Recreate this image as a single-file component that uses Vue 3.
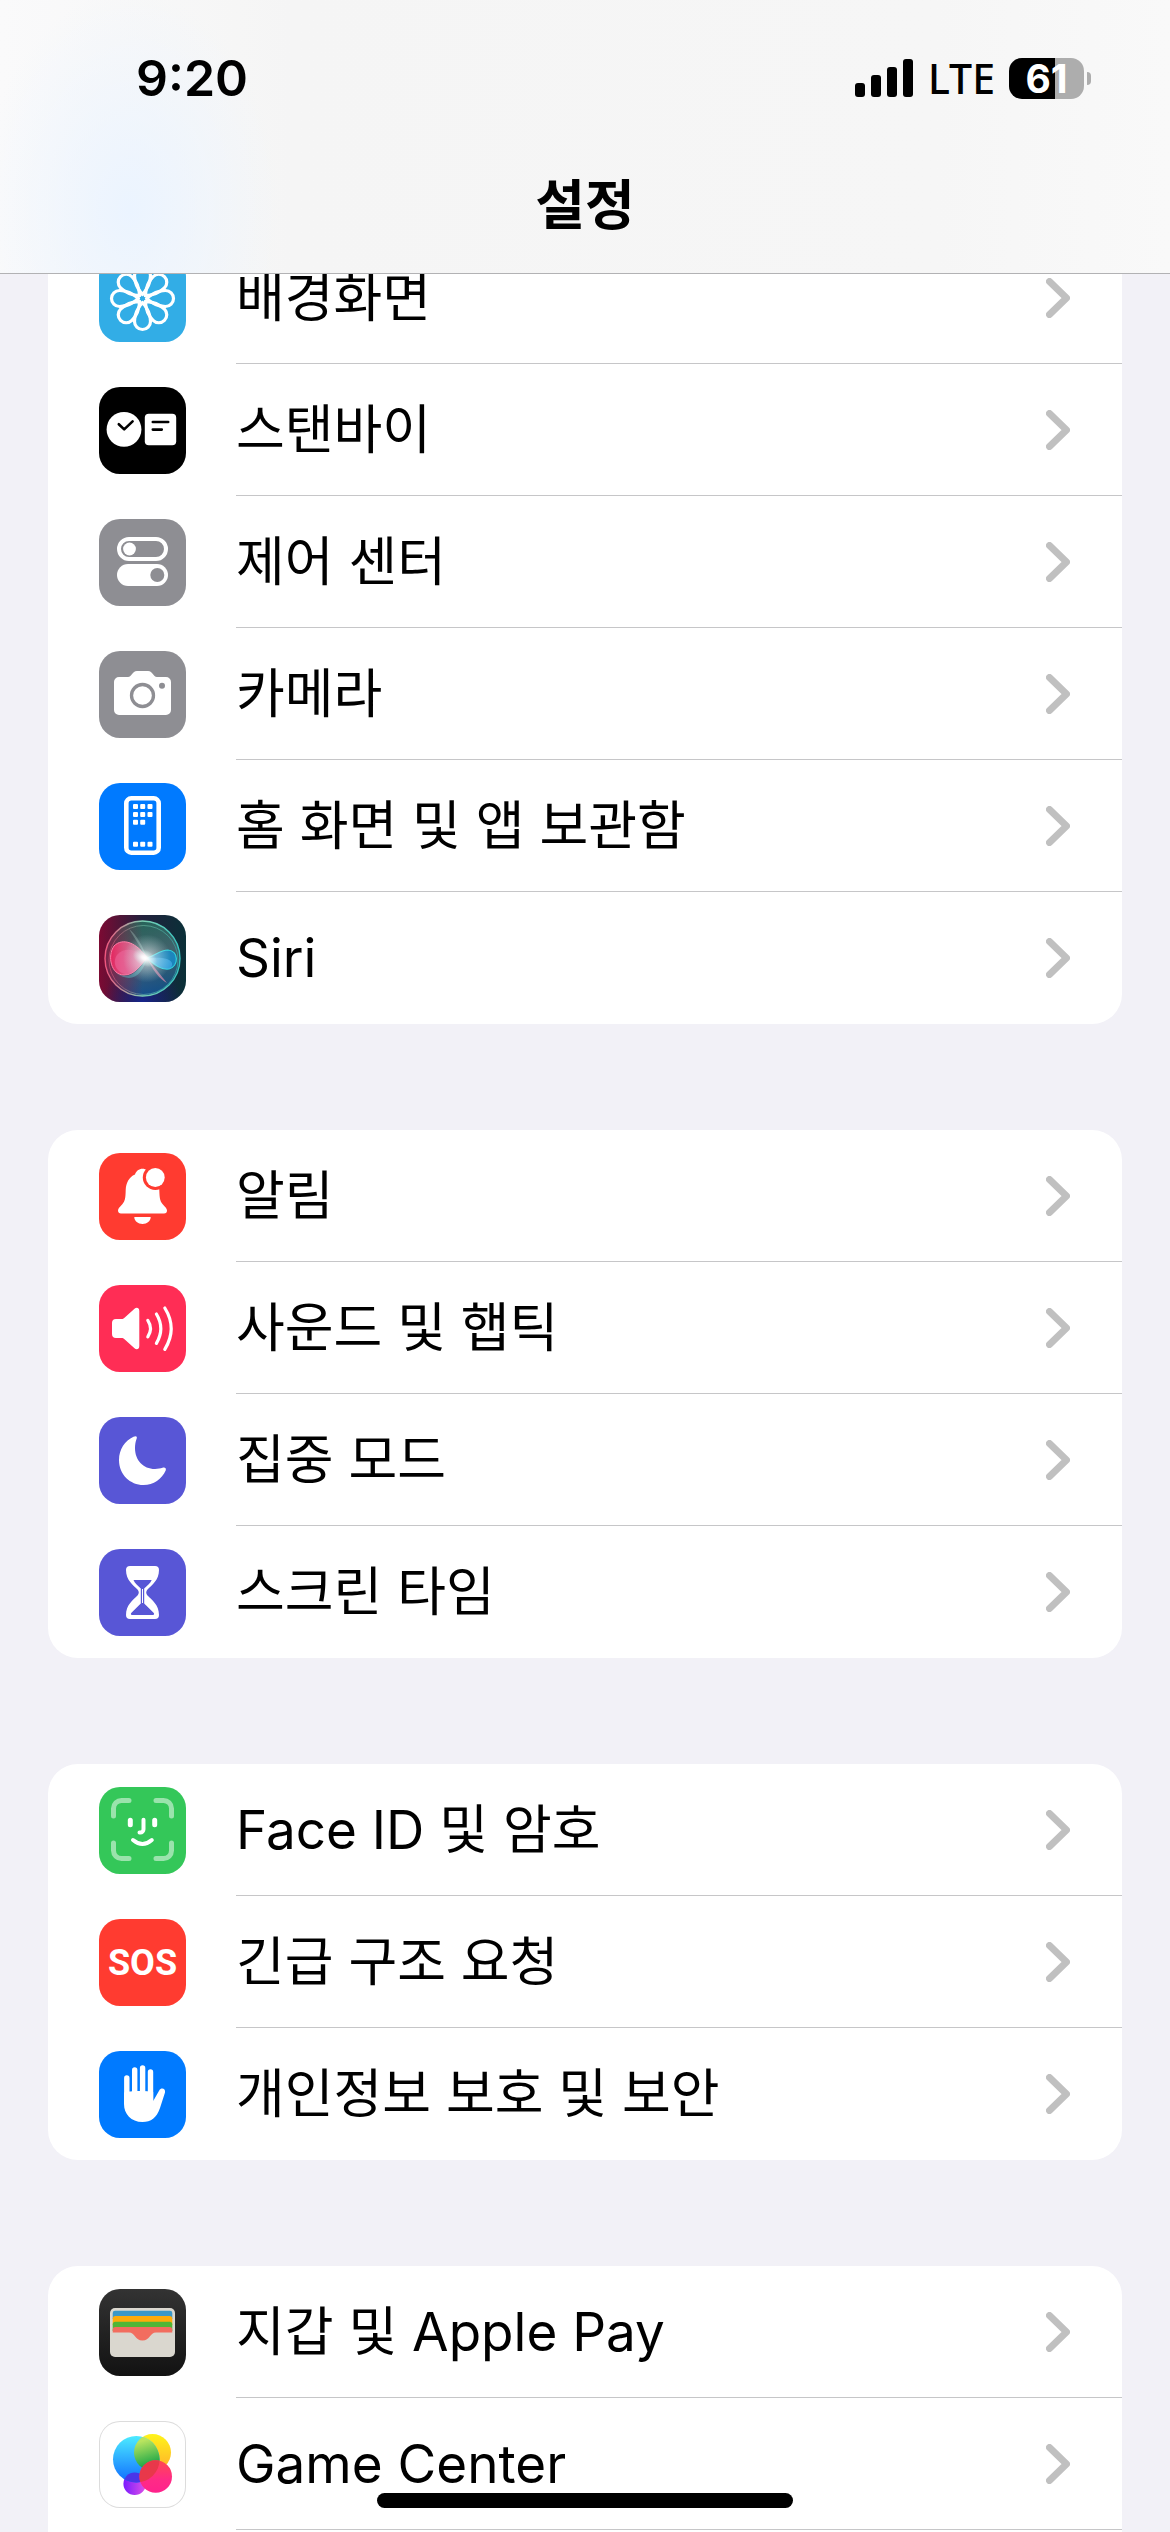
<template>
  <div class="screen">
    <header class="navbar">
      <div class="status-bar">
        <time class="clock">9:20</time>
        <div class="indicators">
          <svg class="signal" viewBox="0 0 58 38" aria-hidden="true">
            <rect x="0" y="24" width="10" height="14" rx="3" />
            <rect x="16" y="16" width="10" height="22" rx="3" />
            <rect x="32" y="8" width="10" height="30" rx="3" />
            <rect x="48" y="0" width="10" height="38" rx="3" />
          </svg>
          <span class="network">LTE</span>
          <span class="battery">61</span>
        </div>
      </div>
      <h1>설정</h1>
    </header>

    <main class="groups">
      <ul v-for="(group, index) in groups" :key="index" class="group">
        <li v-for="item in group" :key="item.icon">
          <a href="#" class="row">
            <span :class="['icon', item.icon]">
              <span v-if="item.icon === 'sos'" class="sos-text">SOS</span>
              <svg v-else viewBox="0 0 87 87" aria-hidden="true">
                <g v-if="item.icon === 'wallpaper'" class="line" stroke-width="3.2">
                  <path
                    v-for="n in 8"
                    :key="n"
                    d="M43.5 39.5C38.5 34 35.5 27 35.5 20.5A8 8 0 0 1 51.5 20.5C51.5 27 48.5 34 43.5 39.5Z"
                    :transform="`rotate(${n * 45} 43.5 43.5)`"
                  />
                </g>

                <g v-else-if="item.icon === 'standby'">
                  <circle cx="25" cy="42.4" r="17.4" />
                  <rect x="45.8" y="26.8" width="31.4" height="31.4" rx="4" />
                  <path class="line dark" stroke-width="2.6" d="M19.8 37.2L25.2 42.4L33.6 34.4M53.8 35H69.2M53.8 42.6H62.8" />
                </g>

                <g v-else-if="item.icon === 'control'">
                  <rect class="line" stroke-width="4" x="20" y="20" width="47" height="20" rx="10" />
                  <circle cx="30.5" cy="30" r="6.4" />
                  <rect x="18" y="45" width="51" height="22" rx="11" />
                  <circle cx="58.3" cy="56" r="7" fill="#8e8e93" />
                </g>

                <g v-else-if="item.icon === 'camera'">
                  <path d="M20 26H29C33 26 33 20 38 20H49C54 20 54 26 58 26H67A5 5 0 0 1 72 31V59A5 5 0 0 1 67 64H20A5 5 0 0 1 15 59V31A5 5 0 0 1 20 26Z" />
                  <circle cx="43.5" cy="44.5" r="11" fill="none" stroke="#8e8e93" stroke-width="3.3" />
                  <circle cx="63" cy="34.8" r="3" fill="#8e8e93" />
                </g>

                <g v-else-if="item.icon === 'home'">
                  <rect class="line" stroke-width="4.6" x="27.3" y="15.3" width="32.4" height="54.4" rx="5" />
                  <rect v-for="dot in homeDots" :key="dot.join()" :x="dot[0]" :y="dot[1]" width="5" height="5" rx="1" />
                </g>

                <g v-else-if="item.icon === 'siri'">
                  <defs>
                    <linearGradient id="siriBack" x1="0" x2="1">
                      <stop offset="0" stop-color="#7c0a33" />
                      <stop offset="0.5" stop-color="#22203c" />
                      <stop offset="1" stop-color="#0a3038" />
                    </linearGradient>
                    <radialGradient id="siriBottom" cx="0.5" cy="1" r="0.45">
                      <stop offset="0" stop-color="#16248c" />
                      <stop offset="1" stop-color="#14207a" stop-opacity="0" />
                    </radialGradient>
                    <linearGradient id="siriOrb" x1="0.3" y1="0" x2="0.6" y2="1">
                      <stop offset="0" stop-color="#23745e" />
                      <stop offset="0.5" stop-color="#4d7078" />
                      <stop offset="1" stop-color="#125a92" />
                    </linearGradient>
                    <linearGradient id="siriRing" x1="0" x2="1">
                      <stop offset="0" stop-color="#f0557d" />
                      <stop offset="0.5" stop-color="#7fd0b4" />
                      <stop offset="1" stop-color="#35c4c0" />
                    </linearGradient>
                    <linearGradient id="siriPink" x1="0" x2="1">
                      <stop offset="0" stop-color="#e3265f" />
                      <stop offset="1" stop-color="#f3a5c5" stop-opacity="0.7" />
                    </linearGradient>
                    <linearGradient id="siriShade" x1="0" x2="1">
                      <stop offset="0" stop-color="#8a1240" stop-opacity="0.8" />
                      <stop offset="0.5" stop-color="#8a1240" stop-opacity="0" />
                    </linearGradient>
                    <radialGradient id="siriGlow">
                      <stop offset="0" stop-color="#fff" />
                      <stop offset="0.25" stop-color="#fff" stop-opacity="0.85" />
                      <stop offset="1" stop-color="#c8f5ee" stop-opacity="0" />
                    </radialGradient>
                  </defs>
                  <rect width="87" height="87" fill="url(#siriBack)" />
                  <rect width="87" height="87" fill="url(#siriBottom)" />
                  <circle cx="43.5" cy="43.5" r="37.5" fill="url(#siriOrb)" fill-opacity="0.8" />
                  <circle cx="43.5" cy="43.5" r="37.5" fill="url(#siriShade)" stroke="url(#siriRing)" stroke-width="1.4" />
                  <circle cx="44.5" cy="45" r="34.5" fill="none" stroke="url(#siriRing)" stroke-opacity="0.5" stroke-width="1" />
                  <path d="M48 43C38 28 24 22 15 31C8 41 12 60 25 60C36 60 41 50 48 43Z" fill="url(#siriPink)" stroke="#ff7da6" stroke-width="1" />
                  <path d="M48 43C38 35 26 31 18 40C13 47 17 57 26 59C36 60 40 52 48 43Z" fill="#ef6ca2" fill-opacity="0.5" />
                  <path d="M17 58C30 66 40 56 48 43C44 58 34 70 17 58Z" fill="#58b7c0" fill-opacity="0.5" />
                  <path d="M48 43C56 50 62 55 70 54C80 51 80 36 69 35C61 35 56 41 48 43Z" fill="#168fcf" fill-opacity="0.8" stroke="#2fd3df" stroke-width="1.2" />
                  <path d="M48 43C55 43 62 42 68 44C74 46 75 51 70 54C60 54 55 48 48 43Z" fill="#4fb4ef" fill-opacity="0.6" />
                  <path d="M48 43L68 68C60 64 54 55 48 43Z" fill="#d58aab" fill-opacity="0.7" />
                  <path d="M48 43L30 14C38 20 44 32 48 43L49 22Z" fill="#bfe5da" fill-opacity="0.3" />
                  <circle cx="48" cy="43.5" r="24" fill="url(#siriGlow)" fill-opacity="0.6" />
                  <ellipse cx="46" cy="43" rx="13" ry="8" transform="rotate(25 46 43)" fill="url(#siriGlow)" />
                </g>

                <g v-else-if="item.icon === 'notifications'">
                  <path d="M43.5 15.7C40 15.7 37 18 36 21.5C30 24 27 30 26.7 37C26.5 45 26 48 23.5 51C21 54 19 55 19 57.6C19 59.5 20.3 60.5 22 60.5H65C67 60.5 68 59.5 68 57.6C68 55 66 54 63.5 51C61 48 60.6 45 60.3 37C60 30 57 24 51 21.5C50 18 47 15.7 43.5 15.7Z" />
                  <path d="M35.3 64H51.7C51.7 68 48 71 43.5 71C39 71 35.3 68 35.3 64Z" />
                  <circle cx="56.3" cy="24.5" r="12.5" fill="#ff3b30" />
                  <circle cx="56.3" cy="24.5" r="9.4" />
                </g>

                <g v-else-if="item.icon === 'sounds'">
                  <path d="M17 34H22.5C24 34 24.5 33.6 25.5 32.8L35.5 23.8C37.5 22 40.3 22.8 40.3 26V61C40.3 64.3 37.5 65 35.5 63.3L25.5 54.2C24.5 53.3 24 53 22.5 53H17A4 4 0 0 1 13 49V38A4 4 0 0 1 17 34Z" />
                  <path class="line" stroke-width="3.2" d="M48.8 35.4Q54.2 43.6 48.8 51.8M57.4 29Q66.2 43.5 57.4 58.4M65.8 23Q78.6 43.5 65.8 64.4" />
                </g>

                <path
                  v-else-if="item.icon === 'focus'"
                  d="M34.5 19.8C37 18.5 38.4 19.5 37.7 21.5C36.5 24.5 36 28 36 31C36 43 44 52 56 52C59 52 61.5 51.5 63.5 50.8C66 50 67.5 51.3 66.7 53.5C63 62 54.5 68 44.5 68C31 68 20 57.5 20 43C20 32.5 26 23.5 34.5 19.8Z"
                />

                <g v-else-if="item.icon === 'screentime'">
                  <path d="M31 17H56A4 4 0 0 1 60 21C60 31 53 36 48.5 40.5C46.8 42.5 46.8 44.5 48.5 46.5C53 51 60 56 60 66A4 4 0 0 1 56 70H31A4 4 0 0 1 27 66C27 56 34 51 38.5 46.5C40.2 44.5 40.2 42.5 38.5 40.5C34 36 27 31 27 21A4 4 0 0 1 31 17Z" />
                  <path fill="#5856d6" d="M34.5 31H52.7C51.5 34 48.5 36.5 45.2 39.5V54.5L54.8 64C55.5 65 55 66 54 66H33C32 66 31.5 65 32.2 64L41.8 54.5V39.5C38.5 36.5 35.7 34 34.5 31Z" />
                  <path d="M43 40H44V54H43Z" />
                </g>

                <g v-else-if="item.icon === 'faceid'" class="line">
                  <path stroke-width="5" opacity="0.5" d="M14.5 29V21.5A8 8 0 0 1 22.5 13.5H30M57 13.5H64.5A8 8 0 0 1 72.5 21.5V29M72.5 56V63.5A8 8 0 0 1 64.5 71.5H57M30 71.5H22.5A8 8 0 0 1 14.5 63.5V56" />
                  <path stroke-width="5" d="M31.3 33.2V37.8M55.7 33.2V37.8" />
                  <path stroke-width="4" d="M44.5 32.7V42.3A3.2 3.2 0 0 1 41.3 45.5H40.5M34 53Q43.5 61 52.8 53" />
                </g>

                <g v-else-if="item.icon === 'privacy'">
                  <path class="line" stroke-width="5.4" d="M27.8 27V50M35.7 19V50M43.6 17V50M51.5 21V50" />
                  <path d="M25 41.5C30 39.5 48 39.5 54.2 41V50L60.2 39.5C62.2 36 66.8 37.5 66 41.5L61 57C57.5 67 52 71 43.5 71C32 71 25 63 25 53Z" />
                </g>

                <g v-else-if="item.icon === 'wallet'">
                  <rect x="11" y="19" width="65" height="49" rx="5" fill="#dad7cf" />
                  <path d="M13.7 30V24A2.4 2.4 0 0 1 16 21.7H71A2.4 2.4 0 0 1 73.3 24V30Z" fill="#3a98c9" />
                  <path d="M13.7 36V29.4A2.4 2.4 0 0 1 16 27H71A2.4 2.4 0 0 1 73.3 29.4V36Z" fill="#feab0b" />
                  <path d="M13.7 42V35.1A2.4 2.4 0 0 1 16 32.7H71A2.4 2.4 0 0 1 73.3 35.1V42Z" fill="#50b636" />
                  <path d="M13.7 43.5V40.4A2.4 2.4 0 0 1 16 38H71A2.4 2.4 0 0 1 73.3 40.4V43.5H57C51 43.5 51 51.6 43.5 51.6C36 51.6 36 43.5 30 43.5Z" fill="#f26d5f" />
                </g>

                <g v-else-if="item.icon === 'gamecenter'">
                  <defs>
                    <linearGradient id="gcBlue" x2="0" y2="1">
                      <stop offset="0" stop-color="#4cebff" />
                      <stop offset="1" stop-color="#0f6cff" />
                    </linearGradient>
                    <linearGradient id="gcYellow" x2="0" y2="1">
                      <stop offset="0" stop-color="#fff41a" />
                      <stop offset="1" stop-color="#ffae2c" />
                    </linearGradient>
                    <linearGradient id="gcGreen" x1="0.3" y1="0" x2="0.6" y2="1">
                      <stop offset="0.15" stop-color="#b9e45f" />
                      <stop offset="0.8" stop-color="#1fa848" />
                    </linearGradient>
                    <linearGradient id="gcPurple" x2="1" y2="0">
                      <stop offset="0" stop-color="#7a1bff" />
                      <stop offset="1" stop-color="#e052e6" />
                    </linearGradient>
                    <linearGradient id="gcPink" x2="0" y2="1">
                      <stop offset="0" stop-color="#ff4a4f" />
                      <stop offset="0.6" stop-color="#ff2a86" />
                      <stop offset="1" stop-color="#ff228c" />
                    </linearGradient>
                    <clipPath id="gcClip">
                      <circle cx="37.3" cy="38.3" r="23.3" />
                    </clipPath>
                  </defs>
                  <circle cx="35.7" cy="62.8" r="11.3" fill="url(#gcPurple)" />
                  <circle cx="53.5" cy="31.5" r="18.5" fill="url(#gcYellow)" />
                  <circle cx="37.3" cy="38.3" r="23.3" fill="url(#gcBlue)" />
                  <g clip-path="url(#gcClip)">
                    <circle cx="53.5" cy="31.5" r="18.5" fill="url(#gcGreen)" />
                    <circle cx="35.7" cy="62.8" r="11.3" fill="#4a35e8" />
                  </g>
                  <circle cx="56.7" cy="55.5" r="16.3" fill="url(#gcPink)" />
                  <g clip-path="url(#gcClip)">
                    <circle cx="56.7" cy="55.5" r="16.3" fill="#e8384a" />
                  </g>
                </g>
              </svg>
            </span>
            <span class="row-body">
              <span class="label">{{ item.label }}</span>
              <svg class="chevron" viewBox="0 0 24 40" aria-hidden="true">
                <path d="M3.5 3.5L20.5 20L3.5 36.5" />
              </svg>
            </span>
          </a>
        </li>
      </ul>
    </main>

    <div class="home-indicator"></div>
  </div>
</template>

<script setup>
const groups = [
  [
    { icon: 'wallpaper', label: '배경화면' },
    { icon: 'standby', label: '스탠바이' },
    { icon: 'control', label: '제어 센터' },
    { icon: 'camera', label: '카메라' },
    { icon: 'home', label: '홈 화면 및 앱 보관함' },
    { icon: 'siri', label: 'Siri' }
  ],
  [
    { icon: 'notifications', label: '알림' },
    { icon: 'sounds', label: '사운드 및 햅틱' },
    { icon: 'focus', label: '집중 모드' },
    { icon: 'screentime', label: '스크린 타임' }
  ],
  [
    { icon: 'faceid', label: 'Face ID 및 암호' },
    { icon: 'sos', label: '긴급 구조 요청' },
    { icon: 'privacy', label: '개인정보 보호 및 보안' }
  ],
  [
    { icon: 'wallet', label: '지갑 및 Apple Pay' },
    { icon: 'gamecenter', label: 'Game Center' }
  ]
]

// app dots on the little phone: three rows plus the dock
const homeDots = [
  [34, 21], [41.2, 21], [48.5, 21],
  [34, 29], [41.2, 29], [48.5, 29],
  [34, 36.7], [41.2, 36.7],
  [34, 58.8], [41.2, 58.8], [48.5, 58.8]
]
</script>

<style>
body {
  background: #f2f1f7;
}
</style>

<style scoped>
.screen {
  height: 100vh;
  overflow: hidden;
  display: flex;
  flex-direction: column;
  background: #f2f1f7;
  color: #000;
  font-family: Inter, "Noto Sans CJK KR", sans-serif;
}

.navbar {
  position: sticky;
  top: 0;
  z-index: 1;
  flex: none;
  box-sizing: border-box;
  height: 274px;
  border-bottom: 1px solid #b2b2b4;
  background:
    radial-gradient(ellipse 150px 220px at 130px 210px, #ebf4ff, rgba(235, 244, 255, 0)),
    linear-gradient(90deg, #fafafb, #f5f5f5 25%, #f6f6f6 80%, #f9f9f9);
}

.status-bar {
  display: flex;
  justify-content: space-between;
  align-items: center;
  height: 156px;
  padding: 0 86px 0 136px;
}

.clock {
  font-size: 50px;
  font-weight: 600;
  line-height: 60px;
}

.indicators {
  display: flex;
  align-items: center;
}

.signal {
  width: 58px;
  height: 38px;
}

.network {
  margin: 0 14px 0 15px;
  font-family: "Noto Sans", sans-serif;
  font-size: 41px;
  font-weight: 500;
  line-height: 48px;
}

.battery {
  position: relative;
  width: 75px;
  border-radius: 13px;
  background: linear-gradient(90deg, #000 61%, #adadad 61%);
  color: #fff;
  font-size: 39px;
  font-weight: 700;
  line-height: 41px;
  text-align: center;
}

.battery::after {
  content: '';
  position: absolute;
  left: 78px;
  top: 14px;
  width: 4px;
  height: 13px;
  border-radius: 0 4px 4px 0;
  background: #adadad;
}

h1 {
  margin: 18px 0 0;
  font-size: 54px;
  font-weight: 700;
  line-height: 64px;
  text-align: center;
}

.groups {
  flex: 1;
  display: flex;
  flex-direction: column;
  gap: 106px;
  margin-top: -42px;
  padding: 0 48px;
}

.group {
  flex: none;
  margin: 0;
  padding: 0;
  list-style: none;
  border-radius: 30px;
  background: #fff;
}

/* the last group carries on below the fold */
.group:last-child {
  flex: 1 0 auto;
  border-radius: 30px 30px 0 0;
}

.row {
  display: flex;
  align-items: flex-start;
  gap: 50px;
  height: 132px;
  padding-left: 51px;
  color: inherit;
  text-decoration: none;
}

.icon {
  flex: none;
  display: flex;
  align-items: center;
  justify-content: center;
  width: 87px;
  height: 87px;
  margin-top: 23px;
  border-radius: 21px;
  overflow: hidden;
}

.icon svg {
  width: 87px;
  height: 87px;
  fill: #fff;
}

.icon .line {
  fill: none;
  stroke: #fff;
  stroke-linecap: round;
  stroke-linejoin: round;
}

.icon .dark {
  stroke: #000;
}

.wallpaper {
  background: #32ade6;
}

.standby {
  background: #000;
}

.control,
.camera {
  background: #8e8e93;
}

.home,
.privacy {
  background: #007aff;
}

.notifications,
.sos {
  background: #ff3b30;
}

.sounds {
  background: #ff2d55;
}

.focus,
.screentime {
  background: #5856d6;
}

.faceid {
  background: #34c759;
}

.wallet {
  background: linear-gradient(#333, #121212);
}

.gamecenter {
  box-shadow: inset 0 0 0 1px #dcdcdc;
}

.sos-text {
  color: #fff;
  font-family: "Liberation Sans Narrow", Roboto, sans-serif;
  font-size: 36px;
  font-weight: 700;
  line-height: 44px;
}

.row-body {
  flex: 1;
  display: flex;
  align-items: center;
  justify-content: space-between;
  box-sizing: border-box;
  height: 132px;
  padding: 1px 52px 0 0;
  border-bottom: 1px solid #c6c6c8;
}

.group:not(:last-child) li:last-child .row-body {
  border-bottom-color: transparent;
}

.label {
  font-size: 53px;
  line-height: 64px;
}

.chevron {
  width: 24px;
  height: 40px;
  fill: none;
  stroke: #c0c0c0;
  stroke-width: 7;
  stroke-linecap: round;
  stroke-linejoin: round;
}

.home-indicator {
  position: fixed;
  left: 50%;
  bottom: 24px;
  z-index: 2;
  width: 416px;
  height: 15px;
  margin-left: -208px;
  border-radius: 8px;
  background: #000;
}
</style>
